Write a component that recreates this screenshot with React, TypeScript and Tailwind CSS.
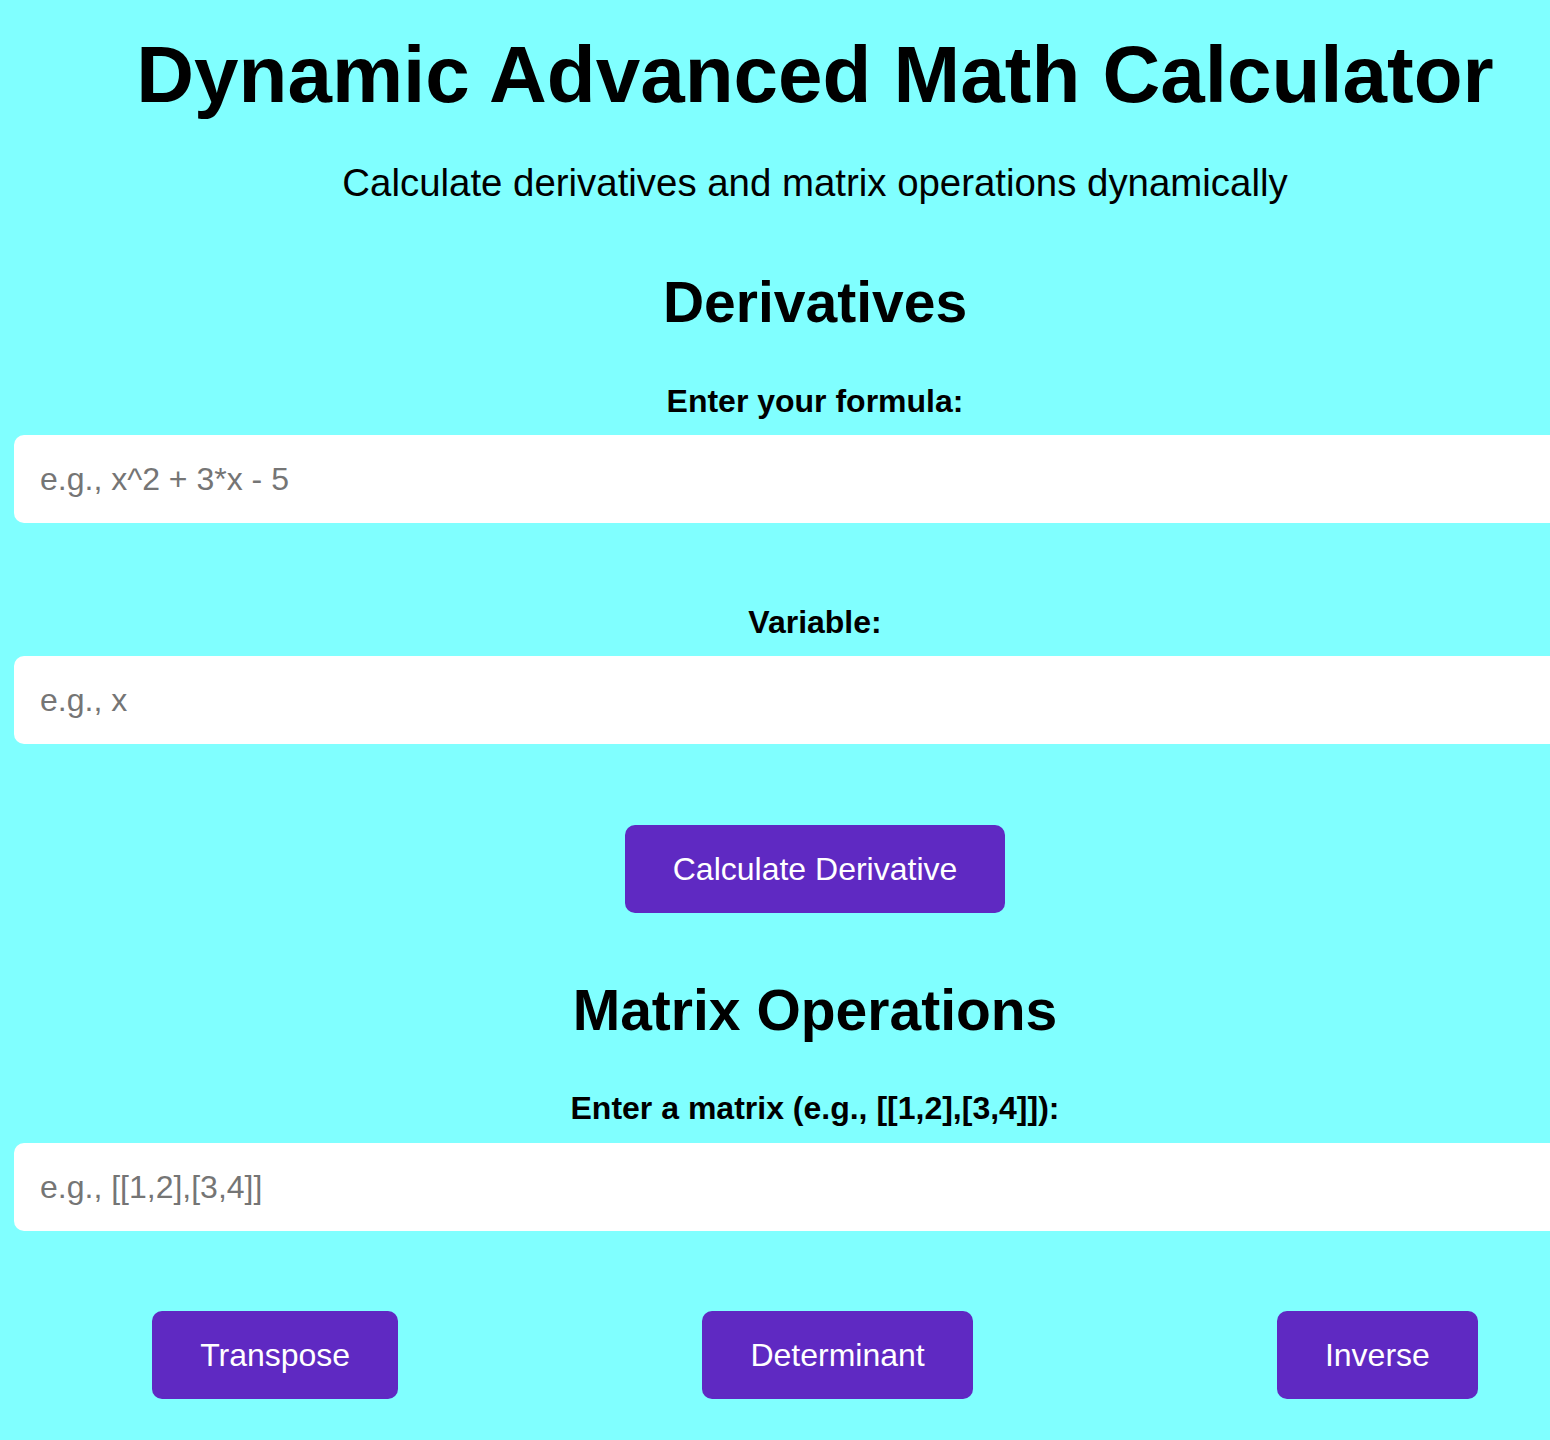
import React, { useState } from "react";

const font = { fontFamily: '"Liberation Sans", Arial, Helvetica, sans-serif' };

function Field({
  label,
  placeholder,
  value,
  onChange,
  labelClass,
  inputClass,
}: {
  label: string;
  placeholder: string;
  value: string;
  onChange: (v: string) => void;
  labelClass: string;
  inputClass: string;
}) {
  return (
    <>
      <label className={`${labelClass} block text-center text-[32px] font-bold leading-none`}>
        {label}
      </label>
      <input
        type="text"
        value={value}
        placeholder={placeholder}
        onChange={(e) => onChange(e.target.value)}
        className={`${inputClass} block h-[88px] w-full rounded-[10px] border-0 bg-white px-[26px] text-[32px] text-black outline-none placeholder:text-[#757575]`}
        style={font}
      />
    </>
  );
}

function PurpleButton({ children }: { children: React.ReactNode }) {
  return (
    <button
      type="button"
      className="h-[88px] rounded-[10px] bg-[#5f29c2] px-[48px] text-[32px] leading-none text-white"
      style={font}
    >
      {children}
    </button>
  );
}

export default function App() {
  const [formula, setFormula] = useState("");
  const [variable, setVariable] = useState("");
  const [matrix, setMatrix] = useState("");

  return (
    <div className="min-h-[1440px] w-full overflow-hidden bg-[#80ffff]" style={font}>
      <div className="w-[1630px] px-[14px] pt-[35px] text-black">
        <h1 className="text-center text-[80px] font-bold leading-none">
          Dynamic Advanced Math Calculator
        </h1>
        <p className="mt-[49px] text-center text-[38.4px] leading-none">
          Calculate derivatives and matrix operations dynamically
        </p>

        <h2 className="mt-[72px] text-center text-[57px] font-bold leading-none">
          Derivatives
        </h2>
        <Field
          labelClass="mt-[54px]"
          inputClass="mt-[18px]"
          label="Enter your formula:"
          placeholder="e.g., x^2 + 3*x - 5"
          value={formula}
          onChange={setFormula}
        />
        <Field
          labelClass="mt-[83px]"
          inputClass="mt-[18px]"
          label="Variable:"
          placeholder="e.g., x"
          value={variable}
          onChange={setVariable}
        />
        <div className="mt-[81px] flex justify-center">
          <PurpleButton>Calculate Derivative</PurpleButton>
        </div>

        <h2 className="mt-[69px] text-center text-[57px] font-bold leading-none">
          Matrix Operations
        </h2>
        <Field
          labelClass="mt-[53px]"
          inputClass="mt-[19px]"
          label="Enter a matrix (e.g., [[1,2],[3,4]]):"
          placeholder="e.g., [[1,2],[3,4]]"
          value={matrix}
          onChange={setMatrix}
        />
        <div className="-mx-[14px] mt-[80px] flex justify-around">
          <PurpleButton>Transpose</PurpleButton>
          <PurpleButton>Determinant</PurpleButton>
          <PurpleButton>Inverse</PurpleButton>
        </div>
      </div>
    </div>
  );
}
